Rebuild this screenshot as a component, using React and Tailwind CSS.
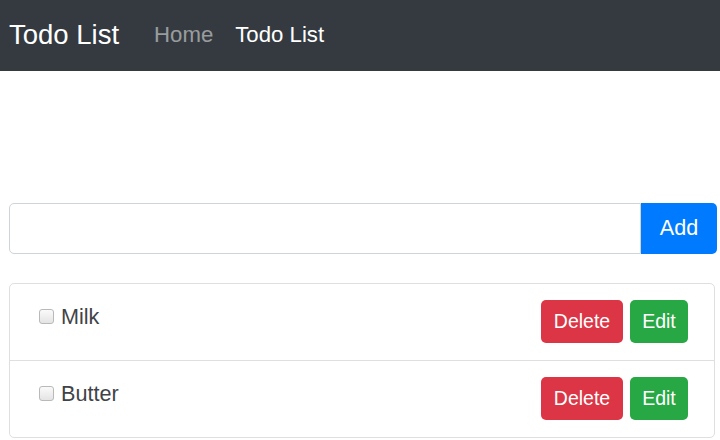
import React, { useState } from "react";

const font = { fontFamily: '"Liberation Sans", Arial, sans-serif' };

function Check() {
  return (
    <span className="mt-[9px] w-[15px] h-[15px] shrink-0 rounded-[3px] border border-[#b9b9b9] bg-gradient-to-b from-[#fafafa] to-[#e4e4e4]" />
  );
}

function TodoRow({ label }) {
  return (
    <li className="flex items-start justify-between pl-[29px] pr-[26px] pt-[16px] pb-[17px] border-b border-[#dfdfdf] last:border-b-0">
      <div className="flex items-start gap-[7px]">
        <Check />
        <span className="text-[21.6px] leading-[33px] text-[#3f4448]">{label}</span>
      </div>
      <div className="flex gap-[7px]">
        <button className="h-[43px] w-[82px] rounded-[5px] bg-[#dc3545] text-white text-[19.5px]">Delete</button>
        <button className="h-[43px] w-[58px] rounded-[5px] bg-[#28a745] text-white text-[19.5px]">Edit</button>
      </div>
    </li>
  );
}

export default function App() {
  const [items] = useState(["Milk", "Butter"]);

  return (
    <div className="w-[720px] h-[440px] overflow-hidden bg-white" style={font}>
      <nav className="h-[71px] bg-[#343a40] flex items-center pl-[9px] pb-[1px]">
        <span className="text-[27.5px] text-white mr-[24px]">Todo List</span>
        <a className="text-[22.2px] text-white/50 px-[11px]">Home</a>
        <a className="text-[22.2px] text-white px-[11px]">Todo List</a>
      </nav>

      <div className="pl-[9px] pr-[3px]">
        <div className="mt-[132px] flex h-[51px]">
          <div className="flex-1 border border-[#ced4da] rounded-l-[5px]" />
          <button className="w-[76px] bg-[#007bff] text-white text-[21.6px] rounded-r-[5px]">Add</button>
        </div>

        <ul className="mt-[29px] mr-[2px] border border-[#dfdfdf] rounded-[5px]">
          {items.map(it => (
            <TodoRow key={it} label={it} />
          ))}
        </ul>
      </div>
    </div>
  );
}
